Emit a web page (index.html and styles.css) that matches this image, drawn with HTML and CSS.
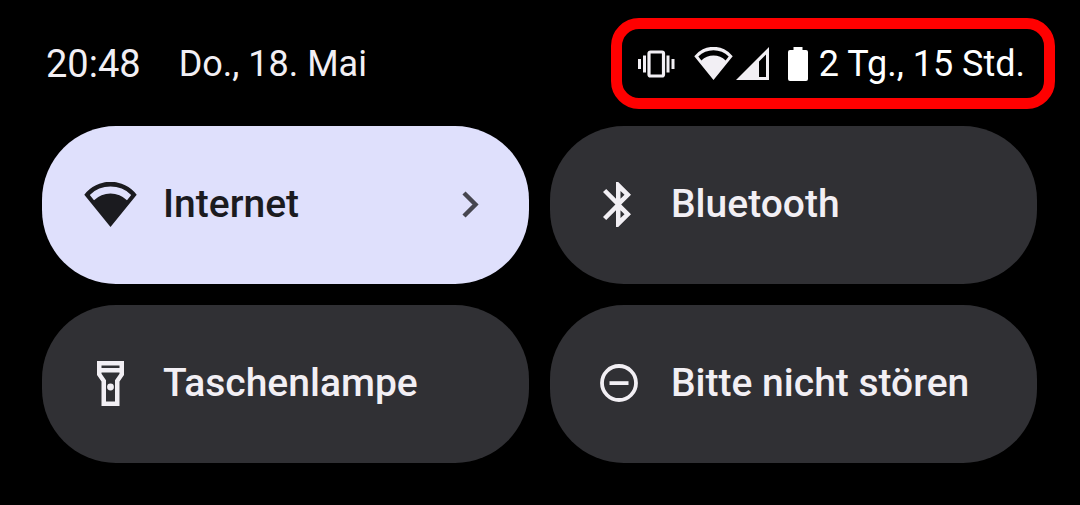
FILE: index.html
```html
<!DOCTYPE html>
<html lang="de">
<head>
    <meta charset="UTF-8">
    <meta name="viewport" content="width=device-width, initial-scale=1.0">
    <title>Schnelleinstellungen</title>
    <link rel="stylesheet" href="styles.css">
</head>
<body>
    <svg class="sprite" aria-hidden="true">
        <symbol id="wifi" viewBox="0 0 53 45">
            <path fill="currentColor" fill-rule="evenodd" d="M0.3 12.7A33 33 0 0 1 52.7 12.7L26.5 45ZM5.800 12.9L10 18.300A23.500 23.500 0 0 1 43 18.300L47.200 12.9A29.500 29.500 0 0 0 5.800 12.9Z"/>
        </symbol>
    </svg>

    <header class="status-bar">
        <div class="clock">
            <time class="time">20:48</time>
            <span class="date">Do., 18. Mai</span>
        </div>
        <div class="status">
            <svg class="vibrate" width="37" height="28" viewBox="0 0 37 28">
                <rect x="11" y="2" width="14.500" height="24" rx="1.500" fill="none" stroke="currentColor" stroke-width="3.200"/>
                <path fill="currentColor" d="M0 9h3v10H0zM5 5.500h3v17H5zM28.500 5.500h3v17h-3zM33.500 9h3v10h-3z"/>
            </svg>
            <svg class="wifi-small" width="39" height="33"><use href="#wifi"/></svg>
            <svg class="signal" width="33" height="33" viewBox="0 0 33 33">
                <path fill="currentColor" fill-rule="evenodd" d="M33 0V33H0ZM30 7.500L23 14.500V30H30Z"/>
            </svg>
            <svg class="battery" width="20" height="34" viewBox="0 0 20 34">
                <path fill="currentColor" d="M5.500 0H14.500V3H18A2 2 0 0 1 20 5V32A2 2 0 0 1 18 34H2A2 2 0 0 1 0 32V5A2 2 0 0 1 2 3H5.500Z"/>
            </svg>
            <span class="remaining">2 Tg., 15 Std.</span>
        </div>
    </header>

    <main class="tiles">
        <button class="tile active" type="button">
            <span class="icon"><svg width="53" height="45"><use href="#wifi"/></svg></span>
            <span class="label">Internet</span>
            <svg class="chevron" width="17" height="27" viewBox="0 0 17 27">
                <path fill="none" stroke="currentColor" stroke-width="4.400" d="M2 2L13.500 13.500L2 25"/>
            </svg>
        </button>
        <button class="tile" type="button">
            <span class="icon">
                <svg width="32" height="45" viewBox="0 0 32 45">
                    <path fill="currentColor" fill-rule="evenodd" d="M13 0H15.200L28 12.700L18.200 22.500L28 32.300L15.200 45H13V28.300L3.200 38.100L0 34.900L12.400 22.500L0 10.100L3.200 6.900L13 16.700ZM17.500 9V16.700L21.500 12.700ZM17.500 28.300V36L21.500 32.300Z"/>
                </svg>
            </span>
            <span class="label">Bluetooth</span>
        </button>
        <button class="tile" type="button">
            <span class="icon">
                <svg width="27" height="45" viewBox="0 0 27 45">
                    <path fill="currentColor" fill-rule="evenodd" d="M0 0H27V14L22.500 20.500V45H4.500V20.500L0 14ZM4.500 4.500V7H22.500V4.500ZM4.500 11.500V12.700L9 19.200V40.500H18V19.200L22.500 12.700V11.500Z"/>
                    <circle cx="13.500" cy="26" r="3.400" fill="currentColor"/>
                </svg>
            </span>
            <span class="label">Taschenlampe</span>
        </button>
        <button class="tile" type="button">
            <span class="icon">
                <svg width="38" height="38" viewBox="0 0 38 38">
                    <circle cx="19" cy="19" r="17" fill="none" stroke="currentColor" stroke-width="3.800"/>
                    <path fill="currentColor" d="M9.500 17.200h19v3.800h-19z"/>
                </svg>
            </span>
            <span class="label">Bitte nicht stören</span>
        </button>
    </main>
</body>
</html>
```
FILE: styles.css
```css
body, html {
    margin: 0;
    padding: 0;
    font-family: Roboto, sans-serif;
    background-color: #000;
    color: #f2eff4;
}

.sprite {
    display: none;
}

.status-bar {
    display: flex;
    align-items: center;
    justify-content: space-between;
    padding: 18px 25px 17px 46px;
    font-size: 36px;
    line-height: 44px;
    white-space: nowrap;
}

.clock {
    display: flex;
    align-items: center;
    gap: 38px;
}

.time {
    font-size: 38px;
}

.status {
    display: flex;
    align-items: center;
    box-sizing: border-box;
    height: 91px;
    padding: 0 19px 0 16px;
    border: 11px solid #ff0000;
    border-radius: 28px;
}

.wifi-small {
    margin-left: 19px;
}

.signal {
    margin-left: 3px;
}

.battery {
    margin: 0 11px 0 19px;
    color: #fff;
}

.remaining {
    color: #fff;
}

.tiles {
    display: grid;
    grid-template-columns: 1fr 1fr;
    gap: 21px;
    padding: 0 43px 42px 42px;
}

.tile {
    display: flex;
    align-items: center;
    gap: 26px;
    height: 158px;
    padding: 0 50px 2px 42px;
    border: none;
    border-radius: 74px;
    background-color: #303034;
    color: #f2eff4;
    font-family: inherit;
    font-size: 39px;
    font-weight: 500;
    line-height: 46px;
    text-align: left;
    white-space: nowrap;
    cursor: pointer;
}

.tile.active {
    background-color: #dfe0fc;
    color: #1b1b1f;
}

.icon {
    display: flex;
    align-items: center;
    justify-content: center;
    flex: none;
    width: 53px;
}

.label {
    flex: 1;
}

.chevron {
    color: #46464f;
}
```
